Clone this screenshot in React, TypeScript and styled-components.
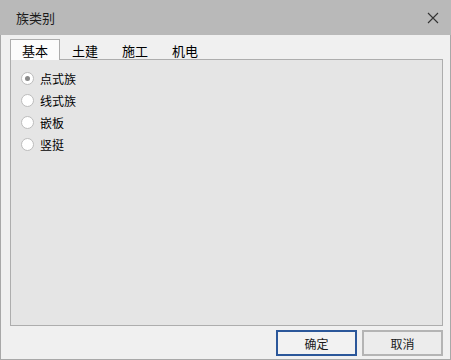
import React, { useState } from "react";
import styled, { createGlobalStyle } from "styled-components";

const GlobalStyle = createGlobalStyle`
  html, body {
    margin: 0;
    padding: 0;
    background: #f0f0f0;
  }
  * {
    box-sizing: border-box;
  }
`;

const font = `"Microsoft YaHei", "Noto Sans CJK SC", "Liberation Sans", sans-serif`;

const Window = styled.div`
  width: 451px;
  height: 360px;
  display: flex;
  flex-direction: column;
  background: #f0f0f0;
  font-family: ${font};
  color: #000;
`;

const TitleBar = styled.div`
  height: 35px;
  flex-shrink: 0;
  background: #b9b9b9;
  display: flex;
  align-items: center;
  justify-content: space-between;
  padding: 0 11px 0 16px;
  .title {
    font-size: 13px;
    color: #1a1a1a;
  }
`;

const CloseButton = styled.div`
  width: 14px;
  height: 14px;
  display: flex;
  align-items: center;
  justify-content: center;
  cursor: pointer;
`;

const Body = styled.div`
  flex: 1;
  display: flex;
  flex-direction: column;
  border: 1px solid #a8a8a8;
  border-top: none;
  padding: 4px 7px 2px 9px;
`;

const TabStrip = styled.div`
  display: flex;
  height: 20px;
  position: relative;
  z-index: 1;
`;

const Tab = styled.div<{ $active: boolean }>`
  width: 50px;
  height: ${(p) => (p.$active ? "21px" : "20px")};
  display: flex;
  align-items: center;
  justify-content: center;
  font-size: 13px;
  cursor: pointer;
  background: ${(p) => (p.$active ? "#fcfcfc" : "transparent")};
  border: 1px solid ${(p) => (p.$active ? "#adadad" : "transparent")};
  border-bottom: none;
  padding-top: 1px;
`;

const Panel = styled.div`
  height: 267px;
  background: #e5e5e5;
  border: 1px solid #adadad;
  padding: 9px 10px;
  display: flex;
  flex-direction: column;
  gap: 4px;
`;

const RadioRow = styled.label`
  display: flex;
  align-items: center;
  height: 18px;
  gap: 6px;
  font-size: 12px;
  cursor: pointer;
`;

const RadioCircle = styled.span<{ $checked: boolean }>`
  width: 13px;
  height: 13px;
  border-radius: 50%;
  border: 1px solid #bcbcbc;
  background: #fff;
  display: flex;
  align-items: center;
  justify-content: center;
  &::after {
    content: "";
    width: 5px;
    height: 5px;
    border-radius: 50%;
    background: ${(p) => (p.$checked ? "#8a8a8a" : "transparent")};
  }
`;

const Footer = styled.div`
  display: flex;
  justify-content: flex-end;
  gap: 5px;
  padding-top: 4px;
`;

const Button = styled.button<{ $primary?: boolean }>`
  width: 81px;
  height: 26px;
  font-family: ${font};
  font-size: 12px;
  color: #1a1a1a;
  background: ${(p) => (p.$primary ? "#f2f2f2" : "#ececec")};
  border: ${(p) => (p.$primary ? "2px solid #2b579a" : "2px solid #b4b4b4")};
  padding: 0;
  cursor: pointer;
`;

const tabs = ["基本", "土建", "施工", "机电"];
const kinds = ["点式族", "线式族", "嵌板", "竖挺"];

const App = () => {
  const [tab, setTab] = useState(0);
  const [kind, setKind] = useState(0);
  return (
    <>
      <GlobalStyle />
      <Window>
        <TitleBar>
          <span className="title">族类别</span>
          <CloseButton>
            <svg width="12" height="12" viewBox="0 0 12 12">
              <path d="M1 1 L11 11 M11 1 L1 11" stroke="#333" strokeWidth="1.1" />
            </svg>
          </CloseButton>
        </TitleBar>
        <Body>
          <TabStrip>
            {tabs.map((t, i) => (
              <Tab key={t} $active={tab === i} onClick={() => setTab(i)}>
                {t}
              </Tab>
            ))}
          </TabStrip>
          <Panel>
            {kinds.map((k, i) => (
              <RadioRow key={k} onClick={() => setKind(i)}>
                <RadioCircle $checked={kind === i} />
                {k}
              </RadioRow>
            ))}
          </Panel>
          <Footer>
            <Button $primary>确定</Button>
            <Button>取消</Button>
          </Footer>
        </Body>
      </Window>
    </>
  );
};

export default App;
